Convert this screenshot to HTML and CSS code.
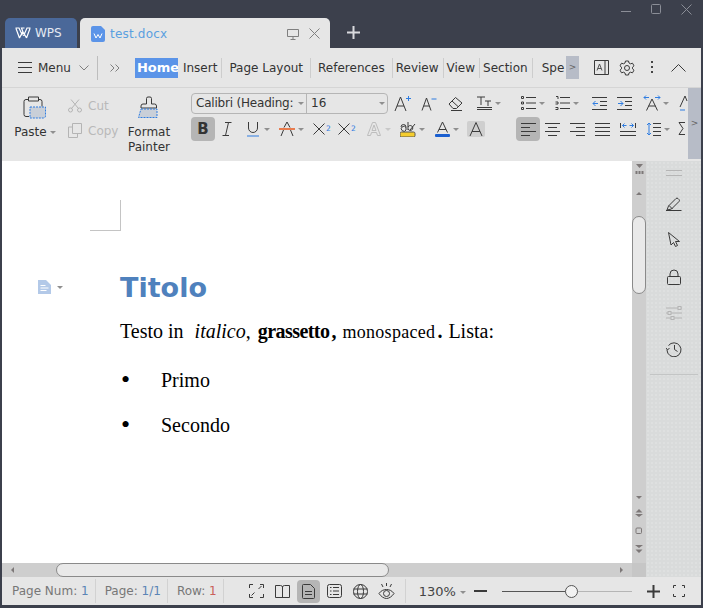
FILE: index.html
```html
<!DOCTYPE html>
<html lang="en">
	<head>
		<meta charset="UTF-8" />
		<title>test.docx</title>
		<link rel="stylesheet" href="styles.css">
	</head>

	<body>
		<div class="titlebar">
			<div class="tab tab-wps">
				<svg class="ic" width="16" height="12" viewBox="0 0 16 12"><path class="w2" d="M.5 1h3.500l3 6.500L8 5 6.500 1H9.500M15.500 1H12L8.500 9M4.500 11L1 1.500M11.500 11L15 1.500M4.500 11l3-6M11.500 11l-3-5.500"/></svg>
				<span>WPS</span>
			</div>
			<div class="tab tab-doc">
				<svg width="14" height="16" viewBox="0 0 14 16"><path d="M2 0h8l4 4v10a2 2 0 0 1-2 2H2a2 2 0 0 1-2-2V2a2 2 0 0 1 2-2z" fill="#5b94e8"/><path d="M3 7.500l2 4.500 2-3.500 2 3.500 2-4.500" fill="none" stroke="#fff"/></svg>
				<span class="tab-name">test.docx</span>
				<svg class="ic tab-monitor" width="12" height="12" viewBox="0 0 12 12"><path class="soft" d="M.5 1.500h11v7h-11zM6 8.500v3M3.500 11.500h5"/></svg>
				<svg class="ic" width="11" height="11" viewBox="0 0 11 11"><path class="soft" d="M.5.500l10 10M10.500.500l-10 10"/></svg>
			</div>
			<svg class="ic tab-plus" width="13" height="13" viewBox="0 0 13 13"><path class="light" d="M6.500 0v13M0 6.500h13"/></svg>
			<div class="window-btns">
				<svg class="ic" width="11" height="11" viewBox="0 0 11 11"><path class="dim" d="M0 7.500h10"/></svg>
				<svg class="ic" width="11" height="11" viewBox="0 0 11 11"><rect class="dim" x=".5" y=".5" width="9" height="9" rx="1"/></svg>
				<svg class="ic" width="11" height="11" viewBox="0 0 11 11"><path class="dim" d="M.5.500l10 10M10.500.500l-10 10"/></svg>
			</div>
		</div>

		<div class="app">
			<div class="menubar">
				<svg class="ic" width="14" height="11" viewBox="0 0 14 11"><path d="M0 .5h14M0 5.500h14M0 10.500h14"/></svg>
				<span class="menu-label">Menu</span>
				<svg class="ic menu-chev" width="10" height="6" viewBox="0 0 10 6"><path class="soft" d="M.5.500l4.500 4.500 4.500-4.500"/></svg>
				<span class="menu-sep"></span>
				<svg class="ic menu-more" width="10" height="8" viewBox="0 0 10 8"><path class="soft" d="M.5.500l3.500 3.500-3.500 3.500M5.500.500l3.500 3.500-3.500 3.500"/></svg>
				<nav class="tabs">
					<span class="nav-item active">Home</span>
					<span class="nav-item">Insert</span>
					<span class="nav-item sep">Page Layout</span>
					<span class="nav-item sep">References</span>
					<span class="nav-item sep tight">Review</span>
					<span class="nav-item sep tight">View</span>
					<span class="nav-item sep tight">Section</span>
					<span class="nav-item sep spe">Spe</span>
				</nav>
				<span class="nav-overflow">&gt;</span>
				<svg class="ic top-a" width="15" height="15" viewBox="0 0 15 15"><path d="M.5.500h14v14H.5zM11 .5v14"/><path class="thin" d="M3 10.500l2.500-6.500 2.500 6.500M3.800 8.500h3.400"/></svg>
				<svg class="ic top-gear" width="16" height="16" viewBox="0 0 16 16"><circle cx="8" cy="8" r="2.500"/><path d="M6.500 1h3l.5 2 1.500.8 2-.6 1.500 2.600-1.500 1.400v1.600l1.500 1.400-1.500 2.600-2-.6-1.500.8-.5 2h-3l-.5-2-1.500-.8-2 .6L1 10.200l1.500-1.400V7.200L1 5.800l1.500-2.600 2 .6L6 3z"/></svg>
				<svg class="top-dots" width="3" height="13" viewBox="0 0 3 13"><path d="M0 0h2v2H0zM0 5h2v2H0zM0 10h2v2H0z" fill="#444"/></svg>
				<svg class="ic top-up" width="15" height="8" viewBox="0 0 15 8"><path d="M.5 7.500l7-7 7 7"/></svg>
			</div>

			<div class="ribbon">
				<div class="ribbon-main">
					<div class="big-tool paste">
						<svg class="ic" width="24" height="24" viewBox="0 0 24 24"><path d="M5 3.500H3a2 2 0 0 0-2 2v13a2 2 0 0 0 2 2h3M16 3.500h1a2 2 0 0 1 2 2v5M5.500 1h10v4h-10z"/><path class="blue-fill" d="M7 11h15.500v9a2 2 0 0 1-2 2H7z"/></svg>
						<span class="big-label">Paste<i class="caret"></i></span>
					</div>
					<div class="small-tools">
						<span class="small-tool"><svg class="ic" width="14" height="14" viewBox="0 0 14 14"><g class="faded"><circle cx="2.500" cy="11" r="2"/><circle cx="11.500" cy="11" r="2"/><path d="M3.500 9.500L11 .5M10.500 9.500L3 .5"/></g></svg>Cut</span>
						<span class="small-tool"><svg class="ic" width="14" height="15" viewBox="0 0 14 15"><g class="faded"><path d="M4.500.5h9v10h-9zM4 4H.5v10.500h9V11"/></g></svg>Copy</span>
					</div>
					<div class="big-tool painter">
						<svg class="ic" width="24" height="24" viewBox="0 0 24 24"><path d="M9.500 8V2.500a1.500 1.500 0 0 1 1.500-1.500h2a1.500 1.500 0 0 1 1.500 1.500V8h3a2 2 0 0 1 2 2v2H4v-2a2 2 0 0 1 2-2z"/><path class="blue-fill" d="M4 13h16v8.500H1.500z"/></svg>
						<span class="big-label">Format<br>Painter</span>
					</div>

					<div class="font-block">
						<div class="row row-top">
							<div class="combo">
								<span class="combo-font">Calibri (Heading:<i class="caret"></i></span>
								<span class="combo-size">16<i class="caret"></i></span>
							</div>
							<span></span>
							<span class="cell"><svg class="ic" width="18" height="17" viewBox="0 0 18 17"><path d="M1 16L6.500 2 12 16M3 11h7"/><path class="blue" d="M12 3.500h5M14.500 1v5"/></svg></span>
							<span class="cell"><svg class="ic" width="16" height="15" viewBox="0 0 16 15"><path d="M1 14.500L5.500 2l4.500 12.500M2.800 10h5.400"/><path class="blue" d="M10.500 3h5"/></svg></span>
							<span class="cell"><svg class="ic" width="16" height="15" viewBox="0 0 16 15"><path d="M1 8l6.500-6.500L14 7l-5.500 5.500H5zM4 5l6 5.500M3 14.500h11"/></svg></span>
							<span></span>
							<span class="cell"><svg class="ic" width="15" height="15" viewBox="0 0 15 15"><path d="M0 1h8M4 1v8M8 5h6M11 5v5M0 11.500h15M0 13.500h15"/></svg></span>
							<span class="cell"><i class="caret"></i></span>
							<span></span>
							<span class="cell"><svg class="ic" width="15" height="14" viewBox="0 0 15 14"><path d="M5 1.500h10M5 7h10M5 12.500h10"/><path d="M.5.500h2v2h-2zM.5 6h2v2h-2zM.5 11.500h2v2h-2z"/></svg></span>
							<span class="cell"><i class="caret"></i></span>
							<span></span>
							<span class="cell"><svg class="ic" width="15" height="14" viewBox="0 0 15 14"><path d="M5 1.500h10M5 7h10M5 12.500h10"/><path d="M1 .5h2v2.500M.5 6h2.500v2h-2.500M.5 11.500h2.500v2h-2.500"/></svg></span>
							<span class="cell"><i class="caret"></i></span>
							<span></span>
							<span class="cell"><svg class="ic" width="15" height="13" viewBox="0 0 15 13"><path d="M0 .5h15M8 4.500h7M8 8.500h7M0 12.500h15"/><path class="blue" d="M6 6.500H1M3.500 4l-2.500 2.500 2.500 2.500"/></svg></span>
							<span></span>
							<span class="cell"><svg class="ic" width="15" height="13" viewBox="0 0 15 13"><path d="M0 .5h15M8 4.500h7M8 8.500h7M0 12.500h15"/><path class="blue" d="M1 6.500h5M3.500 4L6 6.500 3.500 9"/></svg></span>
							<span></span>
							<span class="cell"><svg class="ic" width="18" height="16" viewBox="0 0 18 16"><path d="M3.500 15.500L9 4l5.500 11.500M5.500 11h7"/><path class="blue" d="M1 2.500h5M3 .5l-2 2 2 2M12 2.500h5M15 .5l2 2-2 2"/></svg></span>
							<span class="cell"><i class="caret"></i></span>
							<span></span>
							<span class="cell"><svg class="ic" width="16" height="16" viewBox="0 0 16 16"><path d="M4 12L9 1l2 5"/><path class="blue" d="M4 15h5"/></svg></span>
						</div>
						<div class="row row-bottom">
							<span class="cell on bold-b">B</span>
							<span class="cell"><svg class="ic" width="10" height="14" viewBox="0 0 10 14"><path d="M3 .5h6.500M.5 13.500H7M6.500.5l-3 13"/></svg></span>
							<span></span>
							<span class="cell"><svg class="ic" width="12" height="15" viewBox="0 0 12 15"><path d="M1.500 0v6a4.500 4.500 0 0 0 9 0V0"/><path class="blue" d="M0 14h12"/></svg></span>
							<span class="cell"><i class="caret"></i></span>
							<span></span>
							<span class="cell"><svg class="ic" width="16" height="16" viewBox="0 0 16 16"><path d="M2 15l2.500-6M11.500 9l2.500 6M5 6.500L8 1l3 5.500"/><path class="orange" d="M0 8h16"/></svg></span>
							<span class="cell"><i class="caret"></i></span>
							<span></span>
							<span class="cell script"><svg class="ic" width="12" height="12" viewBox="0 0 12 12"><path d="M.5.500l11 11M11.500.500l-11 11"/></svg><sup>2</sup></span>
							<span></span>
							<span class="cell script"><svg class="ic" width="12" height="12" viewBox="0 0 12 12"><path d="M.5.500l11 11M11.500.500l-11 11"/></svg><sub>2</sub></span>
							<span></span>
							<span class="cell"><svg class="ic" width="14" height="14" viewBox="0 0 14 14"><path class="faded-w" d="M.5 13.500L5.500.5h3l5 13h-3l-1-3h-5l-1 3zM5 8.500h4L7 3z"/></svg></span>
							<span class="cell"><i class="caret faded-caret"></i></span>
							<span></span>
							<span class="cell"><svg class="ic" width="16" height="16" viewBox="0 0 16 16"><path d="M1 6a2.500 2.500 0 1 1 5 0v3M6 6.500a2.500 2.500 0 1 0 0 2.500M8 1v8M8 6a2.500 2.500 0 1 1 0 2M10 9l5-6"/><rect x="0" y="11" width="15" height="5" rx="1.500" fill="#f5cd2e" stroke="#555"/></svg></span>
							<span class="cell"><i class="caret"></i></span>
							<span></span>
							<span class="cell"><svg class="ic" width="15" height="16" viewBox="0 0 15 16"><path d="M2.500 11.500L7.500 1l5 10.500M4 8.500h7"/><rect x="0" y="13" width="15" height="3" rx="1" fill="#1a5fd0" stroke="none"/></svg></span>
							<span class="cell"><i class="caret"></i></span>
							<span></span>
							<span class="cell shade"><svg class="ic" width="14" height="14" viewBox="0 0 14 14"><path d="M1 14L7 .5 13 14M3 9.500h8"/></svg></span>
							<span></span>
							<span class="cell on"><svg class="ic" width="15" height="13" viewBox="0 0 15 13"><path d="M0 .5h15M0 4.500h9M0 8.500h15M0 12.500h9"/></svg></span>
							<span class="cell"><svg class="ic" width="15" height="13" viewBox="0 0 15 13"><path d="M0 .5h15M3 4.500h9M0 8.500h15M3 12.500h9"/></svg></span>
							<span class="cell"><svg class="ic" width="15" height="13" viewBox="0 0 15 13"><path d="M0 .5h15M6 4.500h9M0 8.500h15M6 12.500h9"/></svg></span>
							<span class="cell"><svg class="ic" width="15" height="13" viewBox="0 0 15 13"><path d="M0 .5h15M0 4.500h15M0 8.500h15M0 12.500h15"/></svg></span>
							<span class="cell"><svg class="ic" width="16" height="13" viewBox="0 0 16 13"><path d="M0 8.500h16M0 12.500h16M.5 0v5M15.500 0v5"/><path class="blue" d="M2.500 2.500h4M4.500 .5l-2 2 2 2M9.500 2.500h4M11.500.5l2 2-2 2"/></svg></span>
							<span></span>
							<span class="cell"><svg class="ic" width="15" height="14" viewBox="0 0 15 14"><path d="M7 1.500h8M7 5.500h8M7 9.500h8M7 13.500h8"/><path class="blue" d="M3 1v12M1 3l2-2 2 2M1 11l2 2 2-2"/></svg></span>
							<span class="cell"><i class="caret"></i></span>
							<span></span>
							<span class="cell"><svg class="ic" width="14" height="14" viewBox="0 0 14 14"><path d="M8 .5H2l4 6-4 6h6"/></svg></span>
						</div>
					</div>
				</div>
				<span class="ribbon-more">&gt;</span>
			</div>

			<div class="workspace">
				<div class="doc-column">
					<div class="doc-row">
						<div class="doc">
							<div class="crop-mark"></div>
							<div class="heading-line">
								<span class="para-mark">
									<svg width="13" height="14" viewBox="0 0 13 14"><path d="M0 0h8l5 5v9H0z" fill="#b3c9e8"/><path d="M2.500 5.500h5M2.500 8h8M2.500 10.500h6" stroke="#fff"/></svg>
									<i class="caret"></i>
								</span>
								<h1>Titolo</h1>
							</div>
							<p class="body-text">Testo in <em>italico</em>, <strong>grassetto</strong><span class="comma">,</span> <code>monospaced</code><b class="dot">.</b> <span class="lista">Lista:</span></p>
							<ul class="list">
								<li>Primo</li>
								<li>Secondo</li>
							</ul>
						</div>
						<div class="vscroll">
							<svg class="vs-top" width="9" height="12" viewBox="0 0 9 12"><path d="M1 0h7L4.500 4zM.5 7h2v3h-2zM3.500 7h2v3h-2zM6.500 7h2v3h-2z" fill="#7d7878"/></svg>
							<i class="tri-up"></i>
							<div class="vs-thumb"></div>
							<div class="vs-spacer"></div>
							<i class="tri-down"></i>
							<svg class="vs-nav" width="8" height="8" viewBox="0 0 8 8"><path d="M4 0l3.500 3.500h-7zM0 5h8l-4 3z" fill="#7d7878"/></svg>
							<svg class="vs-nav" width="8" height="8" viewBox="0 0 8 8"><rect x="1" y="1" width="5.500" height="5.500" rx="1" fill="none" stroke="#7d7878"/></svg>
							<svg class="vs-nav" width="8" height="8" viewBox="0 0 8 8"><path d="M0 0h8L4 3zM.5 4.500h7L4 8z" fill="#7d7878"/></svg>
						</div>
					</div>
					<div class="hscroll">
						<i class="tri-left"></i>
						<div class="hs-thumb"></div>
						<i class="tri-right"></i>
						<div class="hs-corner"></div>
					</div>
				</div>
				<aside class="sidebar">
					<div class="grip"></div>
					<svg class="ic side-ic" width="17" height="14" viewBox="0 0 17 14"><path d="M1 13.500h15.500M2 13l1.500-4L11 1.500a1.500 1.500 0 0 1 2 0l1 1a1.500 1.500 0 0 1 0 2L6.500 12zM4 8.500l3.500 3.500"/></svg>
					<svg class="ic side-ic" width="12" height="16" viewBox="0 0 12 16"><path d="M.5.500L11.500 9.500H7.500l2 4-2 1-2-4-2.500 2.500z" /></svg>
					<svg class="ic side-ic" width="14" height="16" viewBox="0 0 14 16"><rect x=".5" y="7.500" width="13" height="8" rx="1"/><path d="M3 7.500V5a4 4 0 0 1 8 0v2.500"/></svg>
					<svg class="ic side-ic" width="16" height="14" viewBox="0 0 16 14"><g class="faded"><path d="M0 2h12M15 2h1M0 7h2M5 7h11M0 12h5M8 12h8"/><rect x="12" y=".5" width="3" height="3"/><rect x="2" y="5.500" width="3" height="3"/><rect x="5" y="10.500" width="3" height="3"/></g></svg>
					<svg class="ic side-ic" width="16" height="16" viewBox="0 0 16 16"><path d="M2.500 4.500a7 7 0 1 1-1.500 4.500M8.500 4v4.500l3 2M0 7l1.500 2L3.500 7"/></svg>
					<div class="side-rule"></div>
				</aside>
			</div>

			<div class="statusbar">
				<span class="stat">Page Num: <b class="num">1</b></span>
				<span class="stat">Page: <b class="num">1/1</b></span>
				<span class="stat">Row: <b class="num red">1</b></span>
				<div class="view-btns">
					<span class="view-btn"><svg class="ic" width="15" height="14" viewBox="0 0 15 14"><path d="M.5 4V.5H4M11 .5h3.500V4M14.500 10v3.500H11M4 13.500H.5V10M5.500 8.500l-3 3M9.500 5l3-3"/></svg></span>
					<span class="view-btn"><svg class="ic" width="15" height="13" viewBox="0 0 15 13"><path d="M7.500 1.500v11M.5.500h5a2 2 0 0 1 2 1.500 2 2 0 0 1 2-1.500h5v12h-14z"/></svg></span>
					<span class="view-btn current"><svg class="ic" width="13" height="15" viewBox="0 0 13 15"><path d="M1.500.5h7l4 4v9a1 1 0 0 1-1 1h-10a1 1 0 0 1-1-1v-12a1 1 0 0 1 1-1zM3 7.500h7M3 10.500h7"/></svg></span>
					<span class="view-btn"><svg class="ic" width="15" height="14" viewBox="0 0 15 14"><rect x=".5" y=".5" width="14" height="13" rx="2"/><path d="M3 3.500h1.500M6 3.500h6M3 7h1.500M6 7h6M3 10.500h1.500M6 10.500h6"/></svg></span>
					<span class="view-btn"><svg class="ic" width="15" height="15" viewBox="0 0 15 15"><circle cx="7.500" cy="7.500" r="7"/><ellipse cx="7.500" cy="7.500" rx="3" ry="7"/><path d="M.5 5h14M.5 10h14"/></svg></span>
					<span class="view-btn"><svg class="ic" width="17" height="17" viewBox="0 0 17 17"><path d="M1 10.500C3 7.500 6 6.500 8.500 6.500s5.500 1 7.500 4c-2 3-5 5-7.500 5S3 13.500 1 10.500z"/><circle cx="8.500" cy="10.500" r="3"/><path d="M3.500 1l1.500 3M13.500 1L12 4M8.500 0v3"/></svg></span>
				</div>
				<span class="zoom-value">130%<i class="caret"></i></span>
				<svg class="ic zoom-minus" width="13" height="2" viewBox="0 0 13 2"><path class="w2" d="M0 1h13"/></svg>
				<div class="slider">
					<div class="slider-knob"></div>
				</div>
				<svg class="ic zoom-plus" width="13" height="13" viewBox="0 0 13 13"><path class="w2" d="M6.500 0v13M0 6.500h13"/></svg>
				<svg class="ic zoom-fit" width="12" height="12" viewBox="0 0 12 12"><path d="M.5 3V.5H3M9 .5h2.500V3M11.500 9v2.500H9M3 11.500H.5V9"/></svg>
			</div>
		</div>
	</body>
</html>
```

FILE: styles.css
```css
:root {
	--frame:    #3c404c;
	--panel:    #e6e6e6;
	--rule:     #cfcfcf;
	--ink:      #333;
	--pressed:  #b5b5b5;
	--more:     #b7bcc7;
	--blue:     #2f7de1;
	--scroll:   #cecece;
}

html, body {
	margin: 0;
	padding: 0;
}

body {
	width: 703px;
	height: 608px;
	overflow: hidden;
	background: var(--frame);
	color: var(--ink);
	font-family: "DejaVu Sans", sans-serif;
	font-size: 12px;
}

i, em {
	font-style: normal;
}

/* icons */
.ic {
	fill: none;
	stroke: #3a3a3a;
	stroke-width: 1;
	flex-shrink: 0;
}
.ic .blue, .ic.blue { stroke: var(--blue); }
.ic .orange { stroke: #e8591c; stroke-width: 1.500; }
.ic .soft { stroke: #7f7f7f; }
.ic .thin { stroke: #555; }
.ic .dim { stroke: #8b8e97; }
.ic .light { stroke: #d9dade; stroke-width: 2; }
.ic .w2 { stroke-width: 2; }
.ic .faded { stroke: #b4b4b4; }
.ic .faded-w { stroke: #bdbdbd; }
.ic .blue-fill {
	fill: #c9cfd8;
	stroke: #2f7de1;
	stroke-dasharray: 2 1;
}
.tab-wps .w2 { stroke: #fff; stroke-width: 1.200; }

.caret {
	display: inline-block;
	width: 0;
	height: 0;
	border-left: 3px solid transparent;
	border-right: 3px solid transparent;
	border-top: 3px solid #8f8f8f;
	vertical-align: middle;
}
.faded-caret {
	border-top-color: #c8c8c8;
}

/* title bar */
.titlebar {
	height: 48px;
	display: flex;
	align-items: flex-end;
	padding-left: 5px;
	position: relative;
}
.tab {
	height: 30px;
	border-radius: 5px 5px 0 0;
	display: flex;
	align-items: center;
	box-sizing: border-box;
}
.tab-wps {
	width: 72px;
	margin-right: 3px;
	padding-left: 10px;
	gap: 4px;
	background: #4a6899;
	color: #e4e9f2;
}
.tab-doc {
	width: 250px;
	padding: 1px 10px 0 11px;
	background: var(--panel);
	color: #5aa0e0;
}
.tab-name {
	margin-left: 5px;
	letter-spacing: .2px;
	flex: 1;
}
.tab-monitor {
	margin-right: 10px;
}
.tab-plus {
	margin: 0 0 9px 17px;
}
.window-btns {
	position: absolute;
	top: 4px;
	right: 11px;
	display: flex;
	gap: 19px;
}

.app {
	margin: 0 2px;
	height: 557px;
	display: flex;
	flex-direction: column;
}

/* menu bar */
.menubar {
	height: 39px;
	flex-shrink: 0;
	display: flex;
	align-items: center;
	background: var(--panel);
	border-bottom: 1px solid #d5d5d5;
	padding-left: 16px;
}
.menu-label {
	margin-left: 6px;
}
.menu-chev {
	margin-left: 8px;
}
.menu-sep {
	width: 1px;
	height: 24px;
	background: #bdbdbd;
	margin: 0 12px 0 8px;
}
.tabs {
	display: flex;
	align-items: center;
	width: 431px;
	flex-shrink: 0;
	margin-left: 15px;
	white-space: nowrap;
	overflow: hidden;
}
.nav-item {
	line-height: 20px;
	padding: 0 4px 0 5px;
	flex-shrink: 0;
}
.nav-item.active {
	background: #5b94e8;
	color: #fff;
	font-weight: bold;
	font-size: 13px;
	padding: 0 1px 0 2px;
	width: 40px;
	overflow: hidden;
}
.nav-item.sep {
	border-left: 1px solid #cdcdcd;
	padding: 0 7px;
}
.nav-item.sep.tight {
	padding: 0 4px 0 3px;
}
.nav-item.sep.spe {
	padding: 0 0 0 9px;
}
.nav-overflow {
	width: 13px;
	height: 23px;
	background: var(--more);
	color: #666;
	font-size: 9px;
	line-height: 23px;
	text-align: center;
}
.top-a { margin-left: 15px; }
.top-gear { margin-left: 10px; }
.top-dots { margin-left: 16px; }
.top-up { margin-left: 17px; }

/* ribbon */
.ribbon {
	height: 73px;
	flex-shrink: 0;
	display: flex;
	background: var(--panel);
}
.ribbon-main {
	flex: 1;
	min-width: 0;
	display: flex;
	overflow: hidden;
}
.ribbon-more {
	width: 13px;
	height: 71px;
	background: var(--more);
	color: #666;
	font-size: 9px;
	line-height: 71px;
	text-align: center;
}
.big-tool {
	display: flex;
	flex-direction: column;
	align-items: center;
	flex-shrink: 0;
	padding-top: 8px;
}
.big-label {
	margin-top: 5px;
	line-height: 15px;
	text-align: center;
	white-space: nowrap;
}
.big-label .caret {
	margin-left: 3px;
}
.paste {
	width: 42px;
	margin-left: 12px;
}
.small-tools {
	width: 59px;
	flex-shrink: 0;
	margin-left: 12px;
	padding-top: 9px;
	display: flex;
	flex-direction: column;
	gap: 8px;
}
.small-tool {
	display: flex;
	align-items: center;
	gap: 6px;
	height: 17px;
	color: #b9b9b9;
}
.painter {
	width: 46px;
	margin-left: -1px;
}
.painter .big-label {
	margin-top: 5px;
}
.font-block {
	flex-shrink: 0;
	margin-left: 19px;
	padding-top: 4px;
}
.row {
	display: grid;
	align-items: center;
}
.row-top {
	height: 22px;
	grid-template-columns: 197px 3px 24px 28px 26px 8px 14px 14px 16px 14px 14px 6px 14px 14px 9px 14px 11px 14px 13px 16px 12px 4px 16px;
}
.row-bottom {
	height: 24px;
	margin-top: 3px;
	grid-template-columns: 24px 24px 7px 14px 14px 6px 14px 14px 3px 22px 3px 22px 9px 14px 14px 6px 14px 14px 6px 14px 14px 5px 15px 33px 24px 25px 25px 25px 25px 6px 14px 14px 2px 16px;
}
.cell {
	display: flex;
	align-items: center;
	justify-content: center;
	height: 100%;
}
.cell.on {
	background: var(--pressed);
	border-radius: 4px;
}
.bold-b {
	font-weight: bold;
	font-size: 15px;
}
.script {
	color: var(--blue);
	font-size: 9px;
}
.script sup, .script sub {
	line-height: 0;
	margin-left: 1px;
}
.shade svg {
	background: #cfcfcf;
	padding: 1px 2px;
	border-radius: 2px;
}
.combo {
	display: flex;
	height: 21px;
	box-sizing: border-box;
	border: 1px solid #b5b5b5;
	border-radius: 4px;
	line-height: 19px;
	white-space: nowrap;
	overflow: hidden;
}
.combo-font {
	width: 115px;
	padding-left: 4px;
	box-sizing: border-box;
	position: relative;
	border-right: 1px solid #b5b5b5;
	letter-spacing: -.2px;
}
.combo-font .caret, .combo-size .caret {
	position: absolute;
	right: 2px;
	top: 8px;
}
.combo-size {
	flex: 1;
	padding-left: 4px;
	position: relative;
}

/* workspace */
.workspace {
	flex: 1;
	min-height: 0;
	display: flex;
}
.doc-column {
	width: 644px;
	display: flex;
	flex-direction: column;
}
.doc-row {
	flex: 1;
	min-height: 0;
	display: flex;
}
.doc {
	flex: 1;
	background: #fff;
	color: #000;
	overflow: hidden;
}
.crop-mark {
	width: 30px;
	height: 30px;
	margin: 39px 0 0 88px;
	border-right: 1px solid #c4c4c4;
	border-bottom: 1px solid #c4c4c4;
}
.heading-line {
	display: flex;
	align-items: center;
	margin-top: 38px;
	height: 36px;
}
.para-mark {
	width: 82px;
	margin-left: 36px;
	display: flex;
	align-items: center;
	gap: 6px;
}
h1 {
	margin: 0;
	font-size: 27px;
	font-weight: bold;
	color: #4f81bd;
}
.body-text {
	margin: 12px 0 0 118px;
	font-family: "Liberation Serif", serif;
	font-size: 20px;
	line-height: 28px;
	white-space: nowrap;
}
.body-text em {
	font-style: italic;
	margin-left: 6px;
}
.body-text strong {
	letter-spacing: -.55px;
	margin-left: 2px;
}
.comma {
	font-weight: bold;
	margin-left: 2px;
}
.body-text code {
	font-family: "Liberation Serif", serif;
	font-size: 18px;
	letter-spacing: .3px;
	margin-left: 1px;
}
.dot {
	margin-left: 2px;
}
.lista {
	margin-left: 1px;
}
.list {
	list-style: none;
	margin: 20px 0 0 118px;
	padding: 0;
	font-family: "Liberation Serif", serif;
	font-size: 20px;
}
.list li {
	display: flex;
	height: 28px;
	line-height: 28px;
	margin-bottom: 17px;
}
.list li::before {
	content: "\2022";
	width: 41px;
	padding-left: 1px;
	box-sizing: border-box;
	font-size: 26px;
}

.vscroll {
	width: 14px;
	flex-shrink: 0;
	background: var(--scroll);
	display: flex;
	flex-direction: column;
	align-items: center;
}
.vs-top {
	margin-top: 3px;
}
.tri-up, .tri-down, .tri-left, .tri-right {
	display: block;
	width: 0;
	height: 0;
	flex-shrink: 0;
	border: 3px solid transparent;
}
.tri-up {
	border-bottom-color: #7d7878;
	margin-top: 13px;
}
.tri-down {
	border-top-color: #7d7878;
	margin-bottom: 7px;
}
.vs-thumb {
	width: 12px;
	height: 76px;
	flex-shrink: 0;
	margin-top: 21px;
	background: #e9e9e9;
	border: 1px solid #8a8a8a;
	border-radius: 7px;
}
.vs-spacer {
	flex: 1;
}
.vs-nav {
	margin-bottom: 10px;
}
.hscroll {
	height: 14px;
	flex-shrink: 0;
	display: flex;
	align-items: center;
	background: var(--scroll);
}
.tri-left {
	border-right-color: #7d7878;
	margin-left: 6px;
}
.hs-thumb {
	width: 331px;
	height: 12px;
	margin-left: 42px;
	background: #e9e9e9;
	border: 1px solid #8a8a8a;
	border-radius: 7px;
}
.tri-right {
	border-left-color: #7d7878;
	margin-left: auto;
	margin-right: 3px;
}
.hs-corner {
	width: 14px;
	height: 14px;
	margin-left: 3px;
	background: #c6c6c6;
}
.sidebar {
	flex: 1;
	display: flex;
	flex-direction: column;
	align-items: center;
	background-color: #d9dbdb;
	background-image: radial-gradient(#dfe1e1 .7px, transparent .8px);
	background-size: 4px 4px;
}
.grip {
	width: 16px;
	height: 4px;
	margin-top: 9px;
	border-top: 1px solid #b5b5b5;
	border-bottom: 1px solid #b5b5b5;
}
.side-ic {
	margin-top: 21px;
}
.side-rule {
	width: 48px;
	height: 1px;
	margin-top: 17px;
	background: #c3c5c5;
}

/* status bar */
.statusbar {
	height: 28px;
	flex-shrink: 0;
	display: flex;
	align-items: center;
	background: var(--panel);
	color: #777;
}
.stat {
	height: 24px;
	line-height: 24px;
	padding: 0 6px 0 10px;
	border-right: 1px solid #d2d2d2;
	white-space: nowrap;
}
.stat + .stat {
	padding-left: 9px;
}
.stat .num {
	font-weight: normal;
	color: #5a84b5;
}
.stat .num.red {
	color: #c9605a;
}
.view-btns {
	display: flex;
	align-items: center;
	gap: 3px;
	margin-left: 21px;
	padding-right: 7px;
	border-right: 1px solid #d2d2d2;
	height: 24px;
}
.view-btn {
	width: 23px;
	height: 23px;
	display: flex;
	align-items: center;
	justify-content: center;
}
.view-btn.current {
	background: var(--pressed);
	border-radius: 4px;
}
.zoom-value {
	margin-left: 13px;
	color: #444;
	font-size: 13px;
	white-space: nowrap;
}
.zoom-value .caret {
	margin-left: 4px;
}
.zoom-minus {
	margin-left: 8px;
}
.slider {
	width: 130px;
	height: 13px;
	margin-left: 15px;
	position: relative;
	flex-shrink: 0;
	background: linear-gradient(#b5b5b5, #b5b5b5) center / 100% 1px no-repeat;
}
.slider::before {
	content: "";
	display: block;
	width: 69px;
	height: 13px;
	background: linear-gradient(#555, #555) center / 100% 1px no-repeat;
}
.slider-knob {
	position: absolute;
	left: 63px;
	top: 0;
	width: 11px;
	height: 11px;
	background: #f2f2f2;
	border: 1px solid #555;
	border-radius: 50%;
}
.zoom-plus {
	margin-left: 15px;
}
.zoom-fit {
	margin-left: 13px;
}
```
